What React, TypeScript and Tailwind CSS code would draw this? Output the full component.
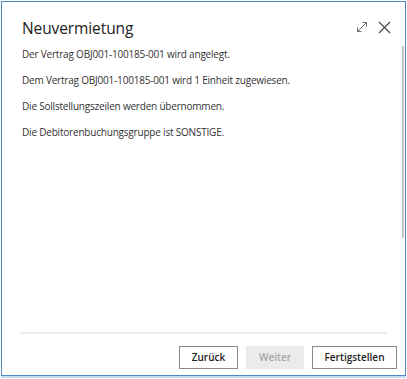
import React from 'react';

function ExpandIcon() {
  return (
    <svg width="12" height="12" viewBox="0 0 12 12" fill="none" stroke="#6b6b6b" strokeWidth="1">
      <path d="M1.5 10.5L10.5 1.5M6.5 1.5h4v4M1.5 6.5v4h4" />
    </svg>
  );
}

function CloseIcon() {
  return (
    <svg width="13" height="13" viewBox="0 0 13 13" fill="none" stroke="#444" strokeWidth="1.1">
      <path d="M1 1l11 11M12 1L1 12" />
    </svg>
  );
}

const lines = [
  'Der Vertrag OBJ001-100185-001 wird angelegt.',
  'Dem Vertrag OBJ001-100185-001 wird 1 Einheit zugewiesen.',
  'Die Sollstellungszeilen werden übernommen.',
  'Die Debitorenbuchungsgruppe ist SONSTIGE.',
];

export default function App() {
  return (
    <div className="w-[407px] h-[379px] bg-white" style={{ fontFamily: '"Open Sans", "Noto Sans", sans-serif' }}>
      <div className="relative ml-[1px] mt-[1px] w-[405px] h-[375px] border border-[#4f88c6] bg-white flex flex-col shadow-[0_2px_0_#c9dbef]">
        {/* Header */}
        <div className="flex items-center justify-between pl-[20px] pr-[14px] pt-[12px] h-[41px]">
          <h1 className="text-[15.5px] text-[#222] leading-none tracking-[-0.1px]">Neuvermietung</h1>
          <div className="flex items-center gap-[10px] -mt-[3px]">
            <ExpandIcon />
            <CloseIcon />
          </div>
        </div>

        {/* Content */}
        <div className="flex-1 pl-[20px] pt-[4px] flex flex-col gap-[12px] text-[10px] text-[#333]">
          {lines.map((l) => (
            <p key={l} className="leading-[14px] tracking-[-0.2px]">{l}</p>
          ))}
        </div>

        {/* Scrollbar */}
        <div className="absolute right-[1px] top-[44px] w-[2px] h-[192px] bg-[#c4c4c4]" />

        {/* Footer */}
        <div className="mx-[18px] h-[2px] bg-[#ebebeb]" />
        <div className="flex justify-end gap-[8px] pr-[8px] pt-[12px] h-[41px]">
          <button className="w-[59px] h-[23px] border border-[#8a8a8a] bg-white text-[10px] font-semibold text-[#222]">Zurück</button>
          <button className="w-[58px] h-[23px] bg-[#ebebeb] text-[10px] font-semibold text-[#a6a6a6]">Weiter</button>
          <button className="w-[85px] h-[23px] border border-[#8a8a8a] bg-white text-[10px] font-semibold text-[#222]">Fertigstellen</button>
        </div>
      </div>
    </div>
  );
}
